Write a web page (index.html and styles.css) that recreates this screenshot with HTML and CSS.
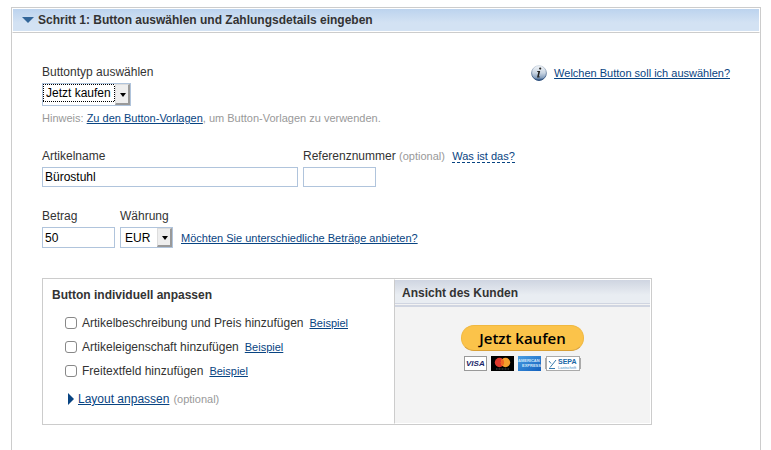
FILE: index.html
```
<!DOCTYPE html>
<html lang="de">
<head>
    <meta charset="utf-8">
    <title>Button erstellen</title>
    <link rel="stylesheet" href="styles.css">
</head>

<body>
<form class="panel">
    <h2 class="panelHead"><span class="arrowDown"></span>Schritt 1: Button auswählen und Zahlungsdetails eingeben</h2>

    <div class="panelBody">
        <div class="topRow">
            <div>
                <label for="buttonType">Buttontyp auswählen</label>
                <div class="selectBox typeBox">
                    <select id="buttonType">
                        <option>Jetzt kaufen</option>
                        <option>Spenden</option>
                    </select>
                </div>
            </div>
            <div class="help">
                <svg width="16" height="16" viewBox="0 0 16 16">
                    <defs>
                        <linearGradient id="infoFill" x1="0" y1="0" x2="0" y2="1">
                            <stop offset="0" stop-color="#f4f7fa"/>
                            <stop offset=".5" stop-color="#c8d4e2"/>
                            <stop offset=".8" stop-color="#8ba3c0"/>
                            <stop offset="1" stop-color="#2c5384"/>
                        </linearGradient>
                        <linearGradient id="infoRing" x1="0" y1="0" x2="0" y2="1">
                            <stop offset="0" stop-color="#d5dde6"/>
                            <stop offset="1" stop-color="#1f4373"/>
                        </linearGradient>
                    </defs>
                    <circle cx="8" cy="8" r="7.4" fill="url(#infoFill)" stroke="url(#infoRing)"/>
                    <circle cx="9.2" cy="3.6" r="1.1" fill="#222"/>
                    <path d="M6.4 6h2.8L7.8 11.4h1.1l-.4 1H6L7.3 6.9H6.1z" fill="#222"/>
                </svg>
                <a href="#">Welchen Button soll ich auswählen?</a>
            </div>
        </div>
        <p class="hint">Hinweis: <a href="#">Zu den Button-Vorlagen</a>, um Button-Vorlagen zu verwenden.</p>

        <div class="row itemRow">
            <div class="field itemName">
                <label for="itemName">Artikelname</label>
                <input type="text" id="itemName" value="Bürostuhl">
            </div>
            <div class="field">
                <div><label for="itemRef">Referenznummer <span class="optional">(optional)</span></label> <a class="whatsThis" href="#">Was ist das?</a></div>
                <input class="short" type="text" id="itemRef" value="">
            </div>
        </div>

        <div class="row priceRow">
            <div class="field">
                <label for="price">Betrag</label>
                <input class="short" type="text" id="price" value="50">
            </div>
            <div class="field">
                <label for="currency">Währung</label>
                <div class="selectBox currencyBox">
                    <select id="currency">
                        <option>EUR</option>
                        <option>USD</option>
                    </select>
                </div>
            </div>
            <a class="amounts" href="#">Möchten Sie unterschiedliche Beträge anbieten?</a>
        </div>

        <div class="customize">
            <div class="options">
                <h3>Button individuell anpassen</h3>
                <div class="option"><input type="checkbox" id="optPrice"><label for="optPrice">Artikelbeschreibung und Preis hinzufügen</label><a href="#">Beispiel</a></div>
                <div class="option"><input type="checkbox" id="optProp"><label for="optProp">Artikeleigenschaft hinzufügen</label><a href="#">Beispiel</a></div>
                <div class="option"><input type="checkbox" id="optText"><label for="optText">Freitextfeld hinzufügen</label><a href="#">Beispiel</a></div>
                <div class="layout"><span class="arrowRight"></span><a href="#">Layout anpassen</a> <span class="optional">(optional)</span></div>
            </div>
            <div class="preview">
                <h3>Ansicht des Kunden</h3>
                <button class="buyNow" type="button">Jetzt kaufen</button>
                <div class="cards">
                    <svg width="23" height="15" viewBox="0 0 23 15">
                        <rect x=".5" y=".5" width="22" height="14" fill="#fff" stroke="#999"/>
                        <text class="visa" x="2" y="10" fill="#1a2568">VISA</text>
                    </svg>
                    <svg width="23" height="15" viewBox="0 0 23 15">
                        <rect width="23" height="15" fill="#000"/>
                        <circle cx="8.5" cy="6.5" r="4.7" fill="#e0392d"/>
                        <circle cx="14.5" cy="6.5" r="4.7" fill="#f5a02c"/>
                        <path d="M11.5 2.9a4.7 4.7 0 0 1 0 7.2a4.7 4.7 0 0 1 0-7.2z" fill="#f26522"/>
                        <path d="M5 13h13" stroke="#555" stroke-dasharray="1 .5"/>
                    </svg>
                    <svg width="23" height="15" viewBox="0 0 23 15">
                        <defs>
                            <linearGradient id="amexFill" x1="0" y1="0" x2="1" y2="1">
                                <stop offset="0" stop-color="#4a9fe4"/>
                                <stop offset="1" stop-color="#1260bd"/>
                            </linearGradient>
                        </defs>
                        <rect width="23" height="15" fill="url(#amexFill)"/>
                        <text class="amex" x="0" y="6" fill="#d3e8fa">AMERICAN</text>
                        <text class="amex" x="4" y="11" fill="#d3e8fa">EXPRESS</text>
                    </svg>
                    <svg width="36" height="15" viewBox="0 0 36 15">
                        <rect x="1.5" y=".5" width="33" height="14" fill="#fff" stroke="#aaa"/>
                        <path d="M.5 2v11M35.5 2v11" stroke="#aaa"/>
                        <path d="M4 5l2 2.5M4 12.5h6M5 11.5l6-7.5" stroke="#3578ad" fill="none"/>
                        <text class="sepa" x="13" y="8" fill="#1967a5">SEPA</text>
                        <text class="debit" x="13" y="13" fill="#3d8cc4">Lastschrift</text>
                    </svg>
                </div>
            </div>
        </div>
    </div>
</form>
</body>
</html>
```
FILE: styles.css
```
*, *::before, *::after {
    box-sizing: border-box;
}

body {
    margin: 0;
    padding: 7px 10px 0 11px;
    min-height: 100vh;
    display: flex;
    flex-direction: column;
    background-color: white;
    color: #333;
    font-family: "Liberation Sans", Arial, sans-serif;
    font-size: 12px;
    line-height: 16px;
}

h2, h3, p {
    margin: 0;
    font-size: 12px;
}

a {
    color: #084482;
    font-size: 11px;
}

input, select, button {
    margin: 0;
    font-family: inherit;
    font-size: 12px;
    color: black;
}

.panel {
    flex: 1;
    border: 1px solid #ccc;
    border-bottom: none;
}

.panelHead {
    display: flex;
    align-items: center;
    height: 25px;
    padding: 0 0 1px 9px;
    border: 1px solid white;
    border-bottom: 1px solid #ccc;
    background: linear-gradient(#bcd3ee, #d3e2f3 60%);
    box-shadow: inset 0 -1px white;
}

.arrowDown {
    margin-right: 4px;
    border: 6px solid transparent;
    border-top: 6px solid #336699;
    border-bottom: none;
}

.panelBody {
    padding: 31px 30px 25px;
}

.topRow {
    display: flex;
    justify-content: space-between;
}

.help {
    display: flex;
    align-items: center;
    gap: 7px;
    height: 18px;
}

.selectBox {
    position: relative;
}

.selectBox select {
    display: block;
    width: 100%;
    height: 100%;
    appearance: none;
    border: 1px solid #b0c4dc;
    border-radius: 0;
    background-color: white;
    padding: 0 0 0 4px;
}

/* the bevelled drop-down button */
.selectBox::after {
    content: "";
    position: absolute;
    top: 1px;
    right: 1px;
    bottom: 1px;
    width: 15px;
    border: 1px solid #ddd;
    border-right: 2px solid #999;
    border-bottom: 2px solid #999;
    background-color: #eee;
    pointer-events: none;
}

.selectBox::before {
    content: "";
    position: absolute;
    z-index: 1;
    top: 50%;
    right: 5px;
    margin-top: -2px;
    border: 3px solid transparent;
    border-top: 4px solid black;
    border-bottom: none;
    pointer-events: none;
}

.typeBox {
    width: 89px;
    height: 23px;
    margin-top: 3px;
}

/* dotted focus ring round the chosen entry */
.typeBox select {
    padding: 0 16px 3px 3px;
    outline: none;
    background:
        repeating-linear-gradient(90deg, black 0 1px, white 1px 2px) 0 0 / 72px 1px no-repeat,
        repeating-linear-gradient(90deg, black 0 1px, white 1px 2px) 0 17px / 72px 1px no-repeat,
        repeating-linear-gradient(black 0 1px, white 1px 2px) 0 0 / 1px 18px no-repeat,
        repeating-linear-gradient(black 0 1px, white 1px 2px) 71px 0 / 1px 18px no-repeat,
        white;
}

.hint {
    margin-top: 4px;
    font-size: 11px;
    color: #999;
}

.optional {
    font-size: 11px;
    color: #999;
}

.row {
    display: flex;
    gap: 5px;
}

.field {
    display: flex;
    flex-direction: column;
    gap: 3px;
}

.field input {
    height: 20px;
    border: 1px solid #b0c4dc;
    padding: 0 2px;
}

.itemRow {
    margin-top: 22px;
}

.itemName {
    width: 256px;
}

.field .short {
    width: 73px;
}

.whatsThis {
    margin-left: 4px;
    text-decoration: none;
    border-bottom: 1px dashed #084482;
}

.priceRow {
    margin-top: 21px;
}

.priceRow input, .currencyBox {
    height: 21px;
}

.currencyBox {
    width: 53px;
}

.amounts {
    align-self: flex-end;
    margin: 0 0 2px 3px;
}

.customize {
    display: flex;
    max-width: 610px;
    margin-top: 30px;
    border: 1px solid #ccc;
}

.options {
    width: 351px;
    padding: 8px 9px 13px;
}

.option {
    display: flex;
    align-items: center;
    height: 24px;
    padding-left: 13px;
}

.options h3 {
    margin-bottom: 8px;
}

.option input {
    appearance: none;
    width: 12px;
    height: 12px;
    margin-right: 5px;
    border: 1px solid #888;
    border-radius: 3px;
    background-color: white;
}

.option input:checked {
    background-color: #336699;
}

.option a {
    margin-left: 6px;
}

.layout {
    display: flex;
    align-items: center;
    gap: 4px;
    height: 24px;
    margin-top: 4px;
    padding-left: 16px;
}

.layout a {
    font-size: 12px;
}

.arrowRight {
    border: 6px solid transparent;
    border-left: 6px solid #084482;
    border-right: none;
}

.preview {
    flex: 1;
    display: flex;
    flex-direction: column;
    align-items: center;
    border: 1px solid white;
    border-left: 1px solid #ccc;
    background-color: #f3f3f3;
}

.preview h3 {
    align-self: stretch;
    height: 27px;
    padding: 5px 7px;
    background: linear-gradient(#cfd5e1, #e9edf2 60%);
    border-bottom: 2px solid #d0d5e1;
    box-shadow: inset 0 -1px #f3f3f3, inset 0 -2px #d0d5e1;
}

.buyNow {
    width: 123px;
    height: 26px;
    margin-top: 18px;
    padding: 0 0 1px;
    border: 1px solid #f0b840;
    border-bottom-color: #d9a035;
    border-radius: 13px;
    background-color: #fbc34a;
    font-family: "Open Sans", "Noto Sans", sans-serif;
    font-size: 15px;
    line-height: 20px;
    font-weight: 600;
    cursor: pointer;
}

.cards {
    display: flex;
    gap: 4px;
    margin-top: 5px;
}

.visa {
    font-size: 8px;
    font-style: italic;
    font-weight: bold;
}

.amex {
    font-size: 4px;
    font-weight: bold;
}

.sepa {
    font-size: 7px;
    font-weight: bold;
}

.debit {
    font-size: 4px;
}
```
